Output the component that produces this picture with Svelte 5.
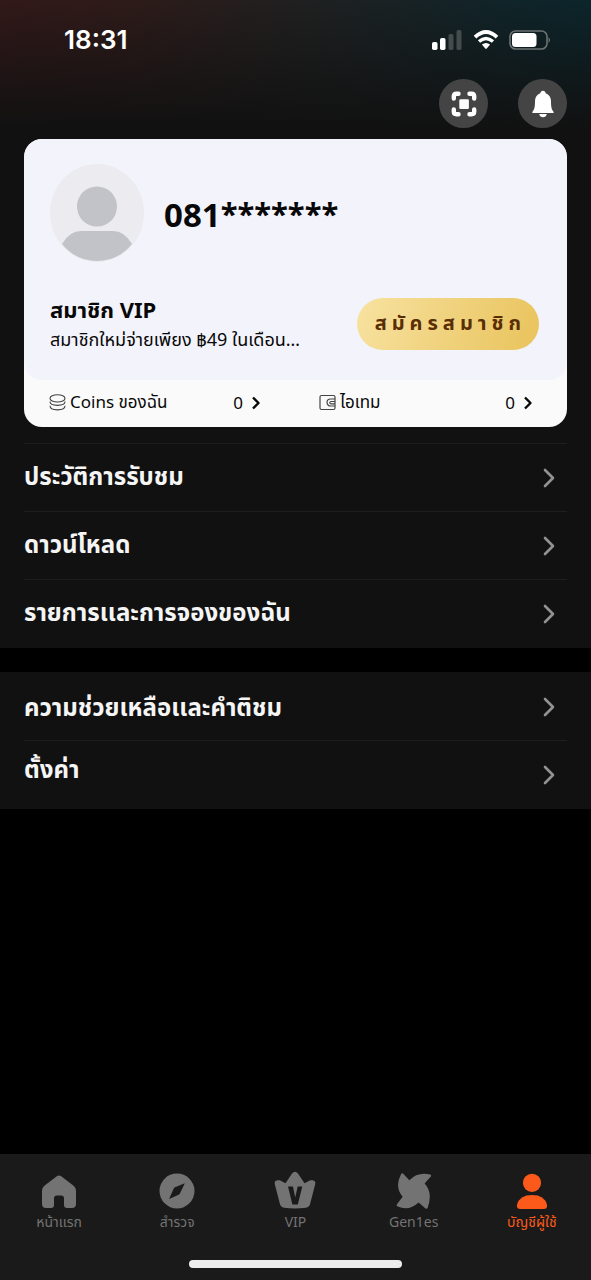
<script>
  const history = [
    { label: 'ประวัติการรับชม' },
    { label: 'ดาวน์โหลด' },
    { label: 'รายการเเละการจองของฉัน' }
  ];
  const support = [
    { label: 'ความช่วยเหลือเเละคำติชม' },
    { label: 'ตั้งค่า', raised: true }
  ];
  const tabs = [
    { id: 'home', label: 'หน้าเเรก' },
    { id: 'explore', label: 'สำรวจ' },
    { id: 'vip', label: 'VIP' },
    { id: 'genies', label: 'Gen1es' },
    { id: 'account', label: 'บัญชีผู้ใช้', active: true }
  ];
</script>

{#snippet chevron()}
  <svg class="chevron" width="14" height="22" viewBox="0 0 14 22" aria-hidden="true">
    <path d="M3 3l8 8-8 8" fill="none" stroke="currentColor" stroke-width="2.6" stroke-linecap="round" stroke-linejoin="round" />
  </svg>
{/snippet}

{#snippet smallChevron()}
  <svg width="10" height="14" viewBox="0 0 10 14" aria-hidden="true">
    <path d="M2 1.500l5.500 5.500L2 12.500" fill="none" stroke="currentColor" stroke-width="2.4" stroke-linejoin="round" />
  </svg>
{/snippet}

{#snippet rows(items)}
  <ul>
    {#each items as item}
      <li>
        <a class="row" href="#menu">
          <span class="label" class:raised={item.raised}>{item.label}</span>
          {@render chevron()}
        </a>
      </li>
    {/each}
  </ul>
{/snippet}

<div class="page">
  <div class="top">
    <header>
      <div class="status">
        <span class="time">18:31</span>
        <div class="signals">
          <svg width="31" height="20" viewBox="0 0 31 20" aria-hidden="true">
            <rect x="0" y="12" width="5.5" height="8" rx="1.8" fill="#fff" />
            <rect x="8" y="8" width="5.5" height="12" rx="1.8" fill="#fff" />
            <rect x="16.5" y="4" width="5" height="16" rx="1.8" fill="#434b4d" />
            <rect x="24.5" y="0" width="5" height="20" rx="1.8" fill="#434b4d" />
          </svg>
          <svg width="26" height="20" viewBox="0 0 26 20" aria-hidden="true">
            <path d="M2 7.2Q13-3 24 7.2" fill="none" stroke="#fff" stroke-width="3.8" />
            <path d="M6 11.6q7-6.2 14 0" fill="none" stroke="#fff" stroke-width="3.4" />
            <path d="M8.9 14.6q4.1-3.4 8.2 0L13.7 18.6q-.7.8-1.4 0z" fill="#fff" />
          </svg>
          <svg width="42" height="20" viewBox="0 0 42 20" aria-hidden="true">
            <rect x="1" y="1" width="37" height="18" rx="5.5" fill="none" stroke="#6b7273" stroke-width="1.6" />
            <rect x="3" y="3" width="24.5" height="14" rx="3.5" fill="#fff" />
            <path d="M39.5 7q3 3 0 6z" fill="#6b7273" />
          </svg>
        </div>
      </div>
      <div class="actions">
        <button class="round" aria-label="สแกน">
          <svg width="26" height="26" viewBox="0 0 26 26" aria-hidden="true">
            <g fill="none" stroke="#fff" stroke-width="4.4" stroke-linecap="round" stroke-linejoin="round">
              <path d="M2.8 7.5V5.5q0-2.7 2.7-2.7h2" />
              <path d="M18.5 2.8h2q2.7 0 2.7 2.7v2" />
              <path d="M23.2 18.5v2q0 2.7-2.7 2.7h-2" />
              <path d="M7.5 23.2h-2q-2.7 0-2.7-2.7v-2" />
            </g>
            <rect x="8.3" y="8.3" width="9.6" height="9.6" rx="1.2" fill="#fff" />
          </svg>
        </button>
        <button class="round" aria-label="การแจ้งเตือน">
          <svg width="24" height="28" viewBox="0 0 24 28" aria-hidden="true">
            <path d="M12 .8c1.500 0 2.500 1 2.700 2.500 3.400 1.200 5.300 4 5.300 7.800 0 5.600.5 8.600 2.300 10.300.8.800.4 1.500-.5 1.500H2.200c-.9 0-1.300-.7-.5-1.500C3.500 19.700 4 16.700 4 11.100c0-3.800 1.900-6.600 5.300-7.800C9.500 1.800 10.500.8 12 .8z" fill="#fff" />
            <path d="M8.2 24h7.600q-.8 3.300-3.800 3.300T8.200 24z" fill="#fff" />
          </svg>
        </button>
      </div>
    </header>

    <section class="card">
      <div class="panel">
        <div class="profile">
          <svg width="94" height="98" viewBox="0 0 94 98" aria-hidden="true">
            <ellipse cx="47" cy="49" rx="47" ry="49" fill="#ebebf0" />
            <circle cx="47" cy="42.5" r="20" fill="#c2c3c8" />
            <path d="M12 80q7.500-13 19-13h32q11.500 0 19 13Q68 97 47 97T12 80z" fill="#c2c3c8" />
          </svg>
          <h1>081<span class="mask">*******</span></h1>
        </div>
        <div class="member">
          <div class="copy">
            <h2>สมาชิก VIP</h2>
            <p>สมาชิกใหม่จ่ายเพียง ฿49 ในเดือน…</p>
          </div>
          <button class="join">สมัครสมาชิก</button>
        </div>
      </div>
      <div class="wallet">
        <a class="coins" href="#coins">
          <svg width="17" height="17" viewBox="0 0 17 17" aria-hidden="true">
            <g fill="none" stroke="#444" stroke-width="1.1">
              <ellipse cx="8.5" cy="4.4" rx="7.5" ry="3.6" />
              <path d="M1 7.600c0 5 15 5 15 0M1 11.800c0 5.400 15 5.400 15 0" />
            </g>
          </svg>
          <span class="name">Coins ของฉัน</span>
          <span>0</span>
          {@render smallChevron()}
        </a>
        <a class="items" href="#items">
          <svg width="17" height="17" viewBox="0 0 17 17" aria-hidden="true">
            <g fill="none" stroke="#444" stroke-width="1.2">
              <rect x="1" y="1.5" width="15" height="14" rx="1.5" />
              <path d="M16 5h-4.500a3.500 3.500 0 0 0 0 7H16M16 7.500h-4a1.200 1.200 0 0 0 0 2.400h4" />
            </g>
          </svg>
          <span class="name">ไอเทม</span>
          <span>0</span>
          {@render smallChevron()}
        </a>
      </div>
    </section>

    {@render rows(history)}
  </div>

  <div class="group">
    {@render rows(support)}
  </div>

  <footer>
    <nav>
      {#each tabs as tab}
        <a href="#{tab.id}" class:active={tab.active}>
          <svg width="42" height="40" viewBox="0 0 42 40" fill="currentColor" aria-hidden="true">
            {#if tab.id === 'home'}
              <path d="M18.800 6.200q2.200-1.600 4.400 0l12.100 9.300q2.700 2.100 2.700 5.200V34q0 4-4 4h-5q-3 0-3-3v-6.500q0-3-3-3h-4q-3 0-3 3V35q0 3-3 3H8q-4 0-4-4V20.700q0-3.100 2.700-5.200z" />
            {:else if tab.id === 'explore'}
              <path fill-rule="evenodd" d="M21 3.500a17.500 17.500 0 1 1 0 35 17.500 17.500 0 0 1 0-35zM28.800 13.300l-9.800 4q-.9.400-1.300 1.200L13.100 29l9.500-4.200q.9-.4 1.300-1.300z" />
            {:else if tab.id === 'vip'}
              <path fill-rule="evenodd" d="M18.200 3.300Q21 .2 23.800 3.300l6.700 10 5.700-3q6-1 5 4l-5.200 20q-.8 3-4 3.400-11 1.600-22 0-3.200-.4-4-3.400L.8 14.300q-1-5 5-4l5.700 3zM14 16.600l4.400 17.800h5.400l4.500-17.800h-4.600L21.200 27.500 19 16.600z" />
            {:else if tab.id === 'genies'}
              <path d="M10.500 3.900l5.800 6.300Q25 1.500 37 4.500q1.800.5.800 1.900L31.600 13.400Q40 22 34.800 37.500q-.8 2.200-2.600.7l-6.600-5.600Q16 41.500 4.800 36.600q-2-1-.6-2.700l5.400-7.200Q1.500 17 7.800 4.700q1.200-2.200 2.700-.8z" />
            {:else}
              <circle cx="21" cy="12.800" r="9.100" />
              <path d="M9.500 39q-4.200 0-3.500-4.200Q8.500 25 21 25t15 9.800Q36.700 39 32.500 39z" />
            {/if}
          </svg>
          <span>{tab.label}</span>
        </a>
      {/each}
    </nav>
    <div class="home-bar"></div>
  </footer>
</div>

<style>
  :global(body) {
    margin: 0;
    background: #000;
  }
  .page {
    min-height: 100vh;
    display: flex;
    flex-direction: column;
    font-family: "Noto Sans", "Noto Sans Thai", "Open Sans", sans-serif;
    color: #f5f5f5;
  }
  .top {
    background:
      linear-gradient(to bottom, transparent, #111 128px),
      linear-gradient(to right, #321819 0%, #2d1b19 22%, #202020 50%, #102429 85%, #0c252b 100%);
  }
  header {
    padding: 24px 24px 12px;
    height: 103px;
  }
  .status {
    display: flex;
    align-items: center;
    justify-content: space-between;
    height: 31px;
    padding: 0 16px 0 40px;
  }
  .time {
    font: 600 26px/31px Inter, sans-serif;
    color: #fff;
  }
  .signals {
    display: flex;
    gap: 10px;
  }
  .actions {
    display: flex;
    justify-content: flex-end;
    gap: 30px;
    padding-top: 24px;
  }
  button {
    border: 0;
    font-family: inherit;
  }
  .round {
    display: grid;
    place-items: center;
    width: 49px;
    height: 49px;
    padding: 0;
    border-radius: 50%;
    background: #444;
  }
  .card {
    margin: 0 24px 16px;
    border-radius: 18px;
    background: #fafafb;
    color: #080808;
    overflow: hidden;
  }
  .panel {
    padding: 25px 28px 26px 26px;
    border-radius: 18px;
    background: #f3f3fb;
  }
  .profile {
    display: flex;
    align-items: center;
    gap: 20px;
  }
  h1 {
    margin: 4px 0 0;
    font-size: 33px;
    line-height: 44px;
    font-weight: 700;
  }
  .mask {
    font-size: 31px;
    line-height: 1;
    vertical-align: 2px;
  }
  .member {
    display: flex;
    align-items: center;
    justify-content: space-between;
    padding-top: 32px;
  }
  h2 {
    margin: 0;
    font-size: 22px;
    line-height: 30px;
    font-weight: 700;
  }
  p {
    margin: 0;
    font-size: 18px;
    line-height: 30px;
    white-space: nowrap;
  }
  .join {
    height: 52px;
    padding: 0 13px 0 18px;
    border-radius: 26px;
    background: linear-gradient(110deg, #f7e2a0, #e9c35c);
    color: #5a2e05;
    font-size: 20px;
    font-weight: 700;
    letter-spacing: 5px;
    white-space: nowrap;
  }
  .wallet {
    display: grid;
    grid-template-columns: 1fr 1fr;
    height: 45px;
    padding: 0 34px 2px 25px;
    font-size: 17px;
  }
  .wallet a {
    display: flex;
    align-items: center;
    gap: 4px;
    color: inherit;
    text-decoration: none;
  }
  .wallet .coins {
    padding-right: 30px;
  }
  .wallet .items {
    padding-left: 28px;
  }
  .name {
    flex: 1;
  }
  .wallet span + span {
    padding-right: 4px;
  }
  ul {
    margin: 0;
    padding: 0 24px 1px;
    list-style: none;
  }
  li {
    border-top: 1px solid #1e1e1e;
  }
  .row {
    display: flex;
    align-items: center;
    justify-content: space-between;
    height: 67px;
    padding-right: 11px;
    color: inherit;
    text-decoration: none;
  }
  .label {
    font-size: 24px;
    line-height: 32px;
    font-weight: 700;
  }
  .top .label {
    padding-bottom: 4px;
  }
  .raised {
    padding-bottom: 12px;
  }
  .chevron {
    color: #929292;
  }
  .group {
    margin-top: 24px;
    background: #111;
  }
  .group li:first-child {
    border-color: transparent;
  }
  footer {
    margin-top: auto;
    padding: 16px 0 12px;
    background: #1a1a1a;
  }
  nav {
    display: grid;
    grid-template-columns: repeat(5, 1fr);
  }
  nav a {
    display: flex;
    flex-direction: column;
    align-items: center;
    color: #737373;
    font-size: 14px;
    line-height: 24px;
    text-decoration: none;
  }
  nav .active {
    color: #fb5a1a;
  }
  .home-bar {
    width: 36%;
    height: 8px;
    margin: 26px auto 0;
    border-radius: 4px;
    background: #ededed;
  }
</style>
